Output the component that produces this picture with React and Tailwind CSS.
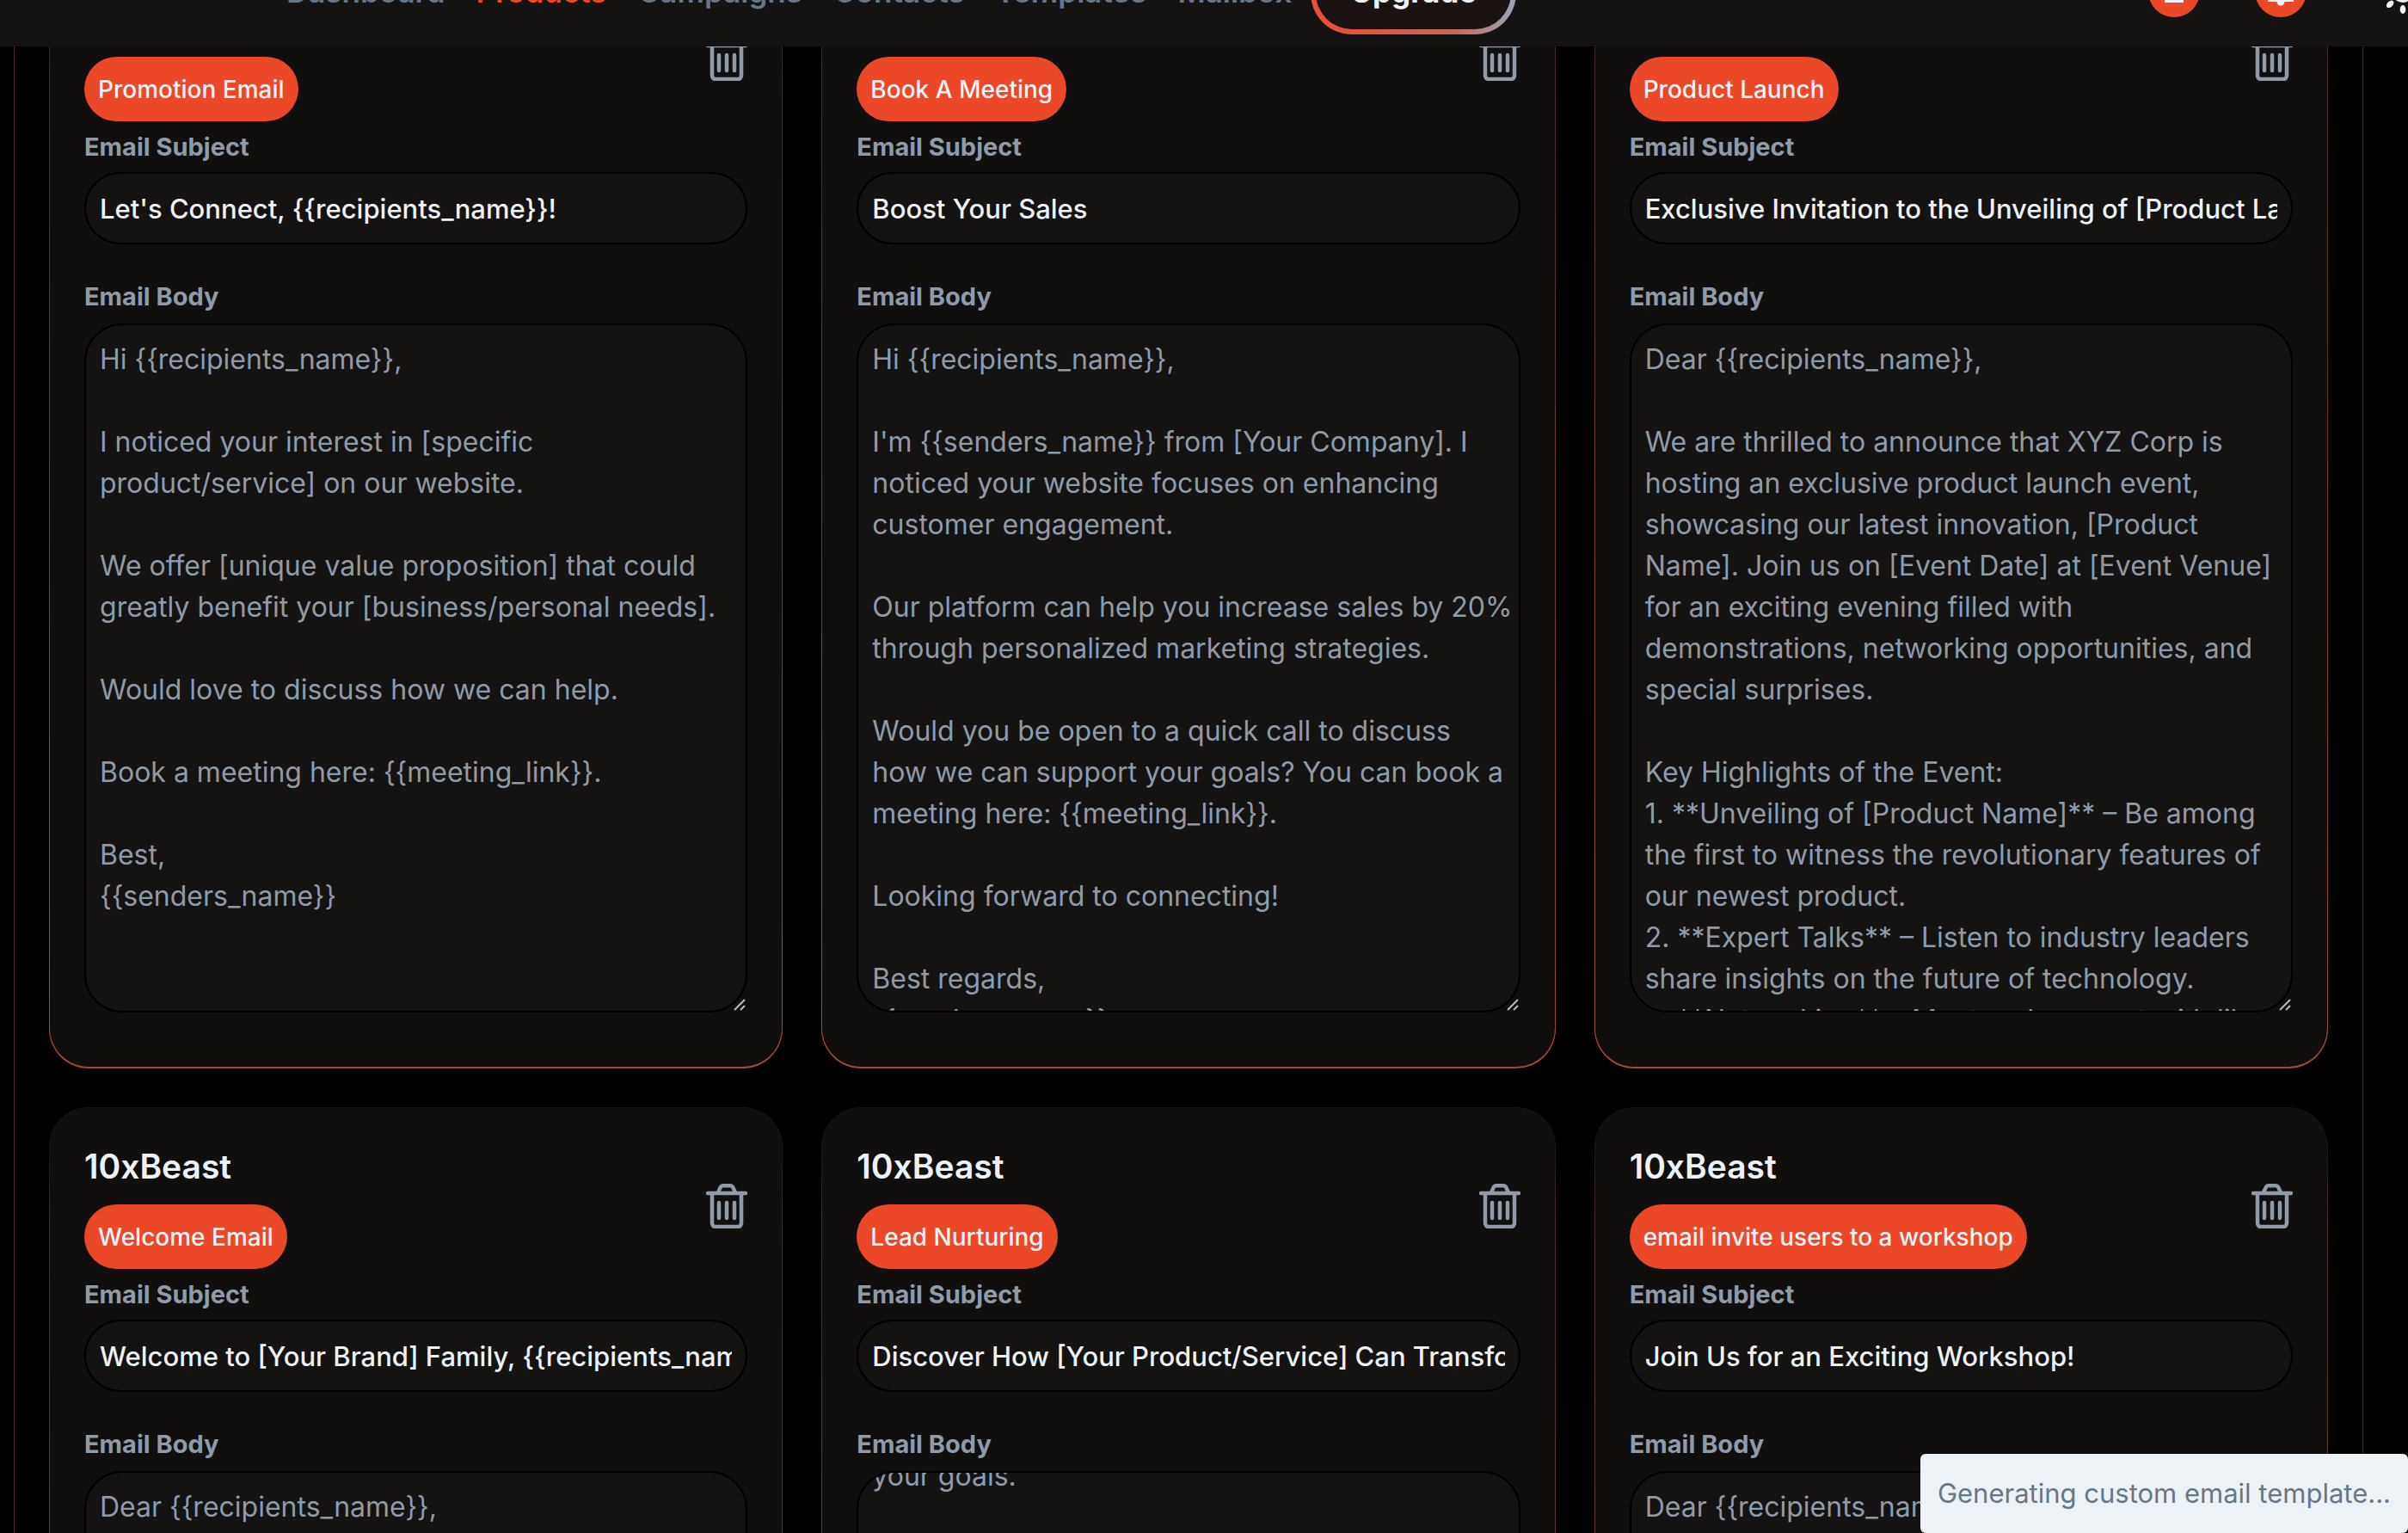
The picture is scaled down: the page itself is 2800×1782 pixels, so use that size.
import { useEffect, useRef, useState } from "react";

const navLinks = [
  { name: "Dashboard", href: "#dashboard" },
  { name: "Products", href: "#products" },
  { name: "Campaigns", href: "#campaigns" },
  { name: "Contacts", href: "#contacts" },
  { name: "Templates", href: "#templates" },
  { name: "Mailbox", href: "#mailbox" },
];

const templates = [
  {
    id: 1,
    product: "10xBeast",
    type: "Promotion Email",
    subject: "Let's Connect, {{recipients_name}}!",
    body: `Hi {{recipients_name}},

I noticed your interest in [specific product/service] on our website.

We offer [unique value proposition] that could greatly benefit your [business/personal needs].

Would love to discuss how we can help.

Book a meeting here: {{meeting_link}}.

Best,
{{senders_name}}`,
  },
  {
    id: 2,
    product: "10xBeast",
    type: "Book A Meeting",
    subject: "Boost Your Sales",
    body: `Hi {{recipients_name}},

I'm {{senders_name}} from [Your Company]. I noticed your website focuses on enhancing customer engagement.

Our platform can help you increase sales by 20% through personalized marketing strategies.

Would you be open to a quick call to discuss
how we can support your goals? You can book a meeting here: {{meeting_link}}.

Looking forward to connecting!

Best regards,
{{senders_name}}`,
  },
  {
    id: 3,
    product: "10xBeast",
    type: "Product Launch",
    subject: "Exclusive Invitation to the Unveiling of [Product Launch]",
    body: `Dear {{recipients_name}},

We are thrilled to announce that XYZ Corp is hosting an exclusive product launch event, showcasing our latest innovation, [Product Name]. Join us on [Event Date] at [Event Venue] for an exciting evening filled with
demonstrations, networking opportunities, and special surprises.

Key Highlights of the Event:
1. **Unveiling of [Product Name]** – Be among the first to witness the revolutionary features of our newest product.
2. **Expert Talks** – Listen to industry leaders share insights on the future of technology.
3. **Networking** – Meet and connect with like-minded people.`,
  },
  {
    id: 4,
    product: "10xBeast",
    type: "Welcome Email",
    subject: "Welcome to [Your Brand] Family, {{recipients_name}}!",
    body: "Dear {{recipients_name}},",
  },
  {
    id: 5,
    product: "10xBeast",
    type: "Lead Nurturing",
    subject: "Discover How [Your Product/Service] Can Transform",
    body: "your goals." + "\n".repeat(18),
    scroll: 36,
  },
  {
    id: 6,
    product: "10xBeast",
    type: "email invite users to a workshop",
    subject: "Join Us for an Exciting Workshop!",
    body: "Dear {{recipients_name}},",
  },
];

function TrashIcon() {
  return (
    <svg viewBox="0 0 48 52" className="w-12 h-[52px]" fill="none" stroke="currentColor" strokeWidth="4.5">
      <path d="M2 11H46" strokeLinecap="round" />
      <path d="M7 12V46a4 4 0 0 0 4 4H37a4 4 0 0 0 4-4V12" />
      <path d="M14 10L17 3.8Q17.800 2.250 19.5 2.250H28.500Q30.200 2.250 31 3.800L34 10" />
      <path d="M15 22V40M24 22V40M33 22V40" strokeLinecap="round" />
    </svg>
  );
}

function SunIcon() {
  const rays = [0, 45, 90, 135, 180, 225, 270, 315];
  return (
    <svg viewBox="-30 -30 60 60" className="w-[60px] h-[60px]" fill="currentColor">
      <circle r="13" />
      {rays.map((r) => (
        <ellipse key={r} cx="0" cy="21" rx="3.3" ry="5" transform={`rotate(${r})`} />
      ))}
    </svg>
  );
}

function Navbar() {
  return (
    <header className="h-[54px] shrink-0 overflow-hidden flex items-end bg-[#141312]">
      <div className="h-32 w-full pl-[333px] flex items-center justify-between">
        {/* LEFT */}
        <nav className="flex items-center gap-9 text-[35px] font-semibold">
          {navLinks.map((link) => (
            <a
              key={link.name}
              href={link.href}
              className={link.name === "Products" ? "text-[#eb4829]" : "text-[#667788]"}
            >
              {link.name}
            </a>
          ))}
          <div className="-ml-3.5 rounded-[48px] p-1.5 bg-linear-to-r from-[#e8503a] from-20% via-[#c4675a] via-70% to-[#94a3b8]">
            <button type="button" className="h-[88px] px-10 rounded-[42px] bg-[#1b1312] text-[#edf2f7] font-bold">
              Upgrade
            </button>
          </div>
        </nav>

        {/* RIGHT */}
        <div className="flex items-center gap-16 -mr-6 text-[#edf2f7]">
          <button type="button" aria-label="Messages" className="w-[60px] h-[60px] rounded-full bg-[#eb4829]">
            <svg viewBox="0 0 60 60" fill="currentColor">
              <rect x="19" y="17" width="22" height="26" rx="1" />
            </svg>
          </button>
          <button type="button" aria-label="Notifications" className="w-[60px] h-[60px] rounded-full bg-[#eb4829]">
            <svg viewBox="0 0 60 60" fill="currentColor">
              <path d="M15 42v-3l4-5v-8a11 11 0 0 1 22 0v8l4 5v3z" />
              <circle cx="30" cy="42" r="4.500" />
            </svg>
          </button>
          <button type="button" aria-label="Theme" className="ml-[18px]">
            <SunIcon />
          </button>
        </div>
      </div>
    </header>
  );
}

function TemplateCard({ template }) {
  const [subject, setSubject] = useState(template.subject);
  const [body, setBody] = useState(template.body);
  const bodyRef = useRef(null);

  useEffect(() => {
    if (template.scroll) bodyRef.current.scrollTop = template.scroll;
  }, [template.scroll]);

  return (
    <div className="rounded-[46px] px-px pt-px pb-0.5 bg-linear-to-b from-[#141312] from-3% via-[#4d2b2a] via-10% to-[#a84638]">
      <div className="rounded-[45px] bg-[#100f0e] px-10 pt-10 pb-[63px]">
        <div className="flex items-center justify-between">
          <div className="flex flex-col items-start gap-4">
            <h2 className="text-[39px] leading-14 font-semibold text-[#edf2f7]">{template.product}</h2>
            <span className="h-[75px] px-4 flex items-center rounded-full bg-[#eb4829] text-[28px] font-medium text-[#edf2f7]">
              {template.type}
            </span>
          </div>
          <button type="button" aria-label="Delete template" className="text-[#8f9ba9]">
            <TrashIcon />
          </button>
        </div>

        <label htmlFor={`subject-${template.id}`} className="block mt-[9px] mb-2 text-[29px] leading-[42px] font-bold text-[#8f9ba9]">
          Email Subject
        </label>
        <input
          id={`subject-${template.id}`}
          type="text"
          value={subject}
          onChange={(e) => setSubject(e.target.value)}
          className="block w-full h-[84px] px-4 rounded-full border-2 border-black bg-[#141312] text-[31px] font-medium text-[#edf2f7] outline-none"
        />

        <label htmlFor={`body-${template.id}`} className="block mt-10 mb-2.5 text-[29px] leading-[42px] font-bold text-[#8f9ba9]">
          Email Body
        </label>
        <div className="relative">
          <textarea
            id={`body-${template.id}`}
            ref={bodyRef}
            value={body}
            onChange={(e) => setBody(e.target.value)}
            className="block w-full h-[801px] pl-4 pr-0 py-4 resize-none rounded-[44px] border-2 border-black bg-[#141312] text-[32px] leading-12 text-[#8f9ba9] outline-none [scrollbar-width:none]"
          />
          {/* resize grip */}
          <svg viewBox="0 0 14 14" className="absolute right-0.5 bottom-0.5 w-3.5 h-3.5" stroke="#b4bcc6" strokeWidth="2">
            <path d="M1 13L13 1M8 13L13 8" />
          </svg>
        </div>
      </div>
    </div>
  );
}

function App() {
  return (
    <div className="h-screen overflow-hidden flex flex-col bg-black font-[Inter,sans-serif]">
      <Navbar />

      <main className="flex-1 min-h-0 overflow-hidden ml-4 mr-[52px] px-10 border-x border-[#4d2b2a]">
        <div className="grid grid-cols-3 gap-[45px] -mt-[101px]">
          {templates.map((t) => (
            <TemplateCard key={t.id} template={t} />
          ))}
        </div>
      </main>

      {/* ===== TOAST ===== */}
      <div role="status" className="fixed bottom-0 right-0 h-[92px] px-5 flex items-center rounded-md bg-[#edf2f7] text-[31px] text-[#667788]">
        Generating custom email template...
      </div>
    </div>
  );
}

export default App;
